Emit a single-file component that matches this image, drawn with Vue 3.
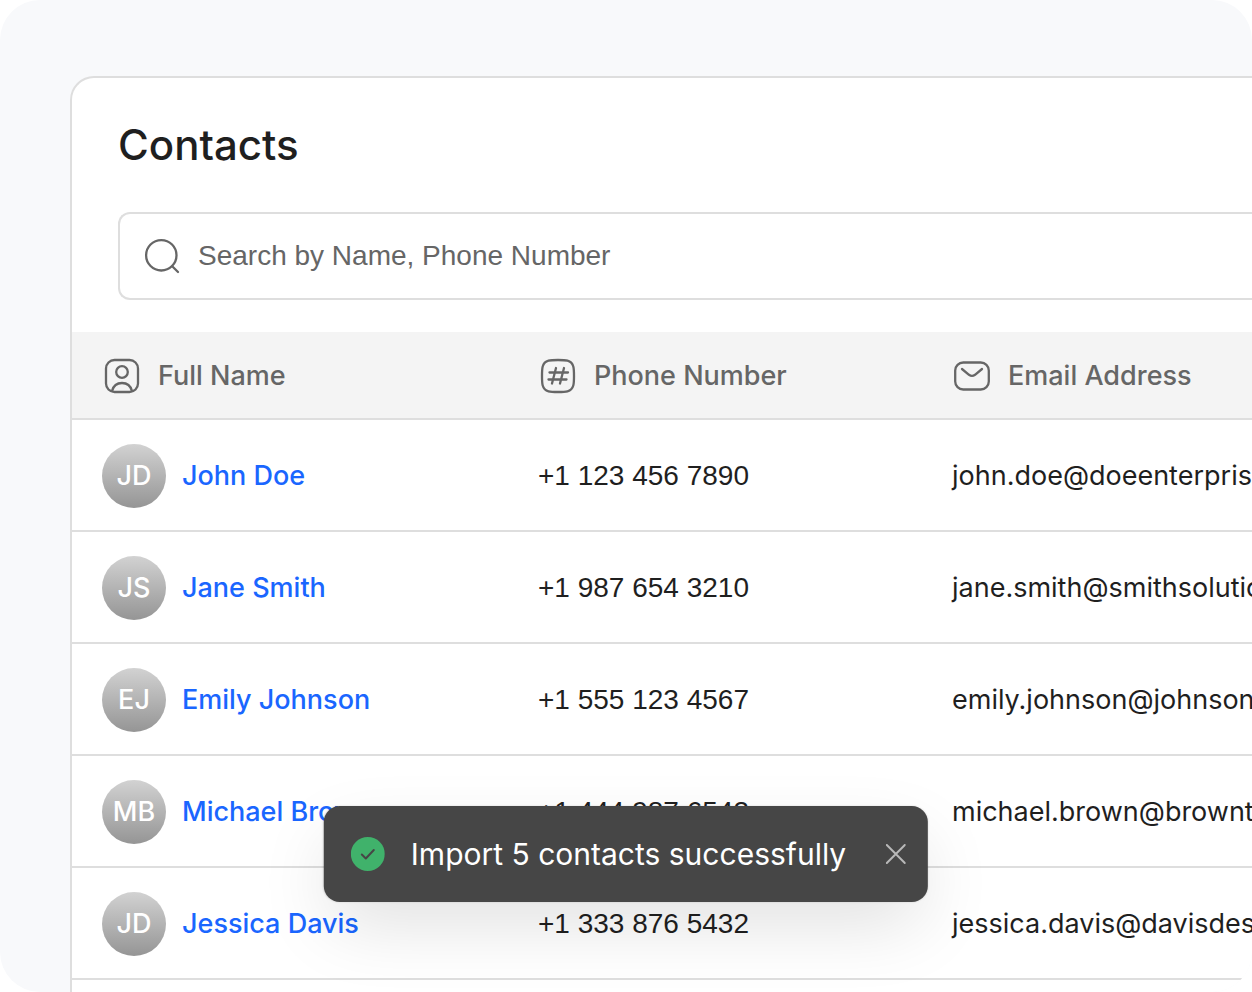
<script setup>
import { ref, computed } from 'vue'

const search = ref('')
const toastVisible = ref(true)

const contacts = [
  { initials: 'JD', name: 'John Doe', phone: '+1 123 456 7890', email: 'john.doe@doeenterprises.com' },
  { initials: 'JS', name: 'Jane Smith', phone: '+1 987 654 3210', email: 'jane.smith@smithsolutions.com' },
  { initials: 'EJ', name: 'Emily Johnson', phone: '+1 555 123 4567', email: 'emily.johnson@johnsongroup.com' },
  { initials: 'MB', name: 'Michael Brown', phone: '+1 444 987 6543', email: 'michael.brown@browntech.com' },
  { initials: 'JD', name: 'Jessica Davis', phone: '+1 333 876 5432', email: 'jessica.davis@davisdesign.com' }
]

// Filter by name or phone
const filtered = computed(() => {
  const q = search.value.trim().toLowerCase()
  if (!q) return contacts
  return contacts.filter(c => c.name.toLowerCase().includes(q) || c.phone.includes(q))
})
</script>

<template>
  <div class="page">
    <main class="panel">
      <h1>Contacts</h1>

      <label class="search">
        <svg class="icon" viewBox="0 0 36 36" aria-hidden="true">
          <circle cx="17.3" cy="17.3" r="15.2" />
          <path d="M28.2 28.2l5.8 5.8" />
        </svg>
        <input v-model="search" type="text" placeholder="Search by Name, Phone Number" aria-label="Search by Name, Phone Number" />
      </label>

      <table>
        <colgroup>
          <col class="col-name" />
          <col class="col-phone" />
          <col />
        </colgroup>
        <thead>
          <tr>
            <th scope="col">
              <div class="head">
                <svg class="icon" viewBox="0 0 36 36" aria-hidden="true">
                  <rect x="2" y="2" width="32" height="32" rx="8.5" />
                  <circle cx="18" cy="14" r="5.8" />
                  <path d="M8 33c1.4-5.2 5.2-8 10-8s8.6 2.8 10 8" />
                </svg>
                <span>Full Name</span>
              </div>
            </th>
            <th scope="col">
              <div class="head">
                <svg class="icon" viewBox="0 0 36 36" aria-hidden="true">
                  <path d="M18 2c3.5 0 7 0 9.500.7 3.200.9 4.900 2.600 5.800 5.800.7 2.500.7 6 .7 9.500s0 7-.7 9.500c-.9 3.200-2.600 4.900-5.800 5.800-2.500.7-6 .7-9.500.7s-7 0-9.500-.7c-3.200-.9-4.900-2.600-5.800-5.800C2 25 2 21.500 2 18s0-7 .7-9.500c.9-3.200 2.600-4.900 5.800-5.800C11 2 14.500 2 18 2z" />
                  <path d="M16 10l-4 15.500M24 10l-4 15.500M9.500 14.500h18.500M8.500 21.500h18" />
                </svg>
                <span>Phone Number</span>
              </div>
            </th>
            <th scope="col">
              <div class="head">
                <svg class="icon" viewBox="0 0 36 36" aria-hidden="true">
                  <rect x="1.2" y="4.5" width="33.6" height="27" rx="8" />
                  <path d="M8 11l7 5.8q3 2.200 6 0l7-5.800" />
                </svg>
                <span>Email Address</span>
              </div>
            </th>
          </tr>
        </thead>
        <tbody>
          <tr v-for="c in filtered" :key="c.email">
            <td>
              <div class="person">
                <span class="avatar">{{ c.initials }}</span>
                <a href="#">{{ c.name }}</a>
              </div>
            </td>
            <td class="phone">{{ c.phone }}</td>
            <td>{{ c.email }}</td>
          </tr>
        </tbody>
      </table>
    </main>

    <div v-if="toastVisible" class="toast" role="status">
      <svg class="check" viewBox="0 0 34 34" aria-hidden="true">
        <circle cx="17" cy="17" r="17" />
        <path d="M11 17.5l4 4 8-8.5" />
      </svg>
      <span class="message">Import 5 contacts successfully</span>
      <button type="button" aria-label="Close" @click="toastVisible = false">
        <svg viewBox="0 0 20 20" aria-hidden="true">
          <path d="M1 1l18 18M19 1L1 19" />
        </svg>
      </button>
    </div>
  </div>
</template>

<style>
body {
  background: #fff;
}
</style>

<style scoped>
.page {
  position: relative;
  display: flex;
  box-sizing: border-box;
  height: 100vh;
  padding: 76px 0 0 70px;
  overflow: hidden;
  background: #f8f9fb;
  border-radius: 40px;
  font-family: Inter, "Liberation Sans", sans-serif;
  font-size: 27px;
  line-height: 36px;
  color: #1f1f1f;
}

.panel {
  flex: 1;
  min-width: 0;
  background: #fff;
  border: 2px solid #dedede;
  border-width: 2px 0 0 2px;
  border-top-left-radius: 24px;
}

h1 {
  margin: 39px 0 39px 46px;
  font-size: 42px;
  line-height: 56px;
  font-weight: 500;
}

.search {
  display: flex;
  align-items: center;
  gap: 18px;
  box-sizing: border-box;
  height: 88px;
  margin: 0 0 32px 46px;
  padding-left: 24px;
  border: 2px solid #dedede;
  border-right: 0;
  border-radius: 12px 0 0 12px;
}

.search input {
  flex: 1;
  min-width: 0;
  padding: 0;
  border: 0;
  outline: 0;
  background: none;
  font-family: "Liberation Sans", Arial, sans-serif;
  font-size: 28px;
  line-height: 36px;
  color: inherit;
}

.search input::placeholder {
  color: #666;
  opacity: 1;
}

.icon {
  flex: none;
  width: 36px;
  height: 36px;
  fill: none;
  stroke: #666;
  stroke-width: 2.3;
  stroke-linecap: round;
  stroke-linejoin: round;
}

table {
  width: 100%;
  table-layout: fixed;
  border-collapse: separate;
  border-spacing: 0;
}

.col-name {
  width: 436px;
}

.col-phone {
  width: 414px;
}

th,
td {
  box-sizing: border-box;
  padding: 2px 0 0 30px;
  border-bottom: 2px solid #dedede;
  text-align: left;
  white-space: nowrap;
  overflow: hidden;
}

th {
  height: 88px;
  padding-left: 32px;
  background: #f4f4f4;
  color: #666;
  font-weight: 500;
}

td {
  height: 112px;
}

/* Even digit widths keep the numbers aligned */
.phone {
  font-family: "Liberation Sans", Arial, sans-serif;
  font-size: 28px;
}

.head {
  display: flex;
  align-items: center;
  gap: 18px;
}

.person {
  display: flex;
  align-items: center;
  gap: 16px;
}

.avatar {
  display: flex;
  flex: none;
  align-items: center;
  justify-content: center;
  width: 64px;
  height: 64px;
  border-radius: 50%;
  background: linear-gradient(#d2d2d2, #959595);
  color: #fff;
  font-weight: 500;
}

.person a {
  color: #1a66ff;
  font-weight: 500;
  text-decoration: none;
}

.toast {
  position: absolute;
  bottom: 90px;
  left: 50%;
  transform: translateX(-50%);
  display: flex;
  align-items: center;
  box-sizing: border-box;
  height: 96px;
  padding: 0 10px 0 27px;
  border-radius: 16px;
  background: #464646;
  box-shadow: 0 0 2px rgba(0, 0, 0, 0.16), 0 28px 72px -8px rgba(0, 0, 0, 0.13);
  color: #fff;
  font-size: 30px;
  line-height: 40px;
  white-space: nowrap;
}

.check {
  width: 34px;
  height: 34px;
  margin-right: 26px;
  fill: #40b26b;
}

.check path {
  fill: none;
  stroke: #464646;
  stroke-width: 2;
  stroke-linecap: round;
  stroke-linejoin: round;
}

.toast button {
  display: flex;
  margin-left: 28px;
  padding: 12px;
  border: 0;
  background: none;
  cursor: pointer;
}

.toast button svg {
  width: 20px;
  height: 20px;
  fill: none;
  stroke: #b8b8b8;
  stroke-width: 2;
  stroke-linecap: round;
}
</style>
